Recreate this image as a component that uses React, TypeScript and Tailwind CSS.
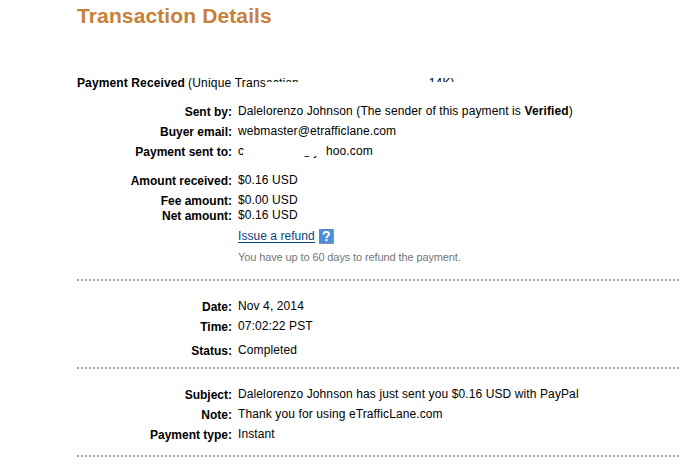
import type { ReactNode } from 'react'

interface RowProps {
  label: string
  children: ReactNode
  className?: string
}

function Row({ label, children, className = '' }: RowProps) {
  return (
    <div className={`flex h-[15px] whitespace-nowrap ${className}`}>
      <dt className="w-[155px] pt-px text-right font-bold">{label}</dt>
      <dd className="ml-[6px] tracking-[0.11px]">{children}</dd>
    </div>
  )
}

function DottedRule({ className = '' }: { className?: string }) {
  return (
    <div
      className={`h-[2px] w-[602px] bg-[repeating-linear-gradient(90deg,#a6a6a6_0_2px,transparent_2px_4px)] ${className}`}
    />
  )
}

function HelpIcon() {
  return (
    <svg width="15" height="15" viewBox="0 0 15 15" className="ml-1 block">
      <rect width="15" height="15" fill="#8a929b" />
      <rect width="14" height="14" fill="#4b8edb" />
      <path
        d="M4.6 5.4C4.6 3.8 5.6 3 7.3 3c1.7 0 2.7.8 2.7 2.1C10 6.9 7.4 7 7.4 9.2"
        fill="none"
        stroke="#fff"
        strokeWidth="2"
      />
      <rect x="6.4" y="10.2" width="2.1" height="2" fill="#fff" />
    </svg>
  )
}

export default function App() {
  return (
    <main className="h-[471px] w-[690px] overflow-hidden bg-white pl-[77px] font-['Liberation_Sans',Arial,sans-serif] text-[12px] leading-[15px] text-black">
      <h1 className="pt-1 text-[21px] leading-[24px] font-bold tracking-[0.12px] text-[#c88039]">
        Transaction Details
      </h1>

      <div className="mt-[48px] flex h-[15px] whitespace-nowrap">
        <span className="font-bold tracking-[0.12px]">Payment Received</span>
        <span className="ml-[3px] tracking-[0.2px]">(Unique Trans</span>
        <span className="relative tracking-[0.14px]">
          action
          <span className="absolute top-[6px] left-0 h-[9px] w-full bg-white" />
        </span>
        <span className="relative ml-[130px] tracking-[0.1px]">
          14K)
          <span className="absolute top-[6px] left-0 h-[9px] w-full bg-white" />
        </span>
      </div>

      <dl>
        <Row label="Sent by:" className="mt-[13px]">
          Dalelorenzo Johnson (The sender of this payment is <b>Verified</b>)
        </Row>
        <Row label="Buyer email:" className="mt-[5px]">
          webmaster@etrafficlane.com
        </Row>
        <Row label="Payment sent to:" className="mt-[5px]">
          <span className="flex">
            <span className="relative w-[6px]">
              c
              <span className="absolute top-[8px] left-[5px] h-[4px] w-[2px] bg-white" />
            </span>
            <span className="relative ml-[57px] w-[19px]">
              @y
              <span className="absolute top-0 left-0 h-[12px] w-full bg-white" />
            </span>
            <span className="ml-[6px]">hoo.com</span>
          </span>
        </Row>
        <Row label="Amount received:" className="mt-[14px]">
          $0.16 USD
        </Row>
        <Row label="Fee amount:" className="mt-[5px]">
          $0.00 USD
        </Row>
        <Row label="Net amount:">$0.16 USD</Row>
      </dl>

      <div className="mt-[6px] ml-[161px] flex h-[15px]">
        <a
          href="#"
          className="h-[14px] border-b border-[#084482] tracking-[0.05px] text-[#084482]"
        >
          Issue a refund
        </a>
        <HelpIcon />
      </div>
      <p className="mt-[6px] ml-[161px] text-[11px] tracking-[-0.11px] text-[#757575]">
        You have up to 60 days to refund the payment.
      </p>

      <DottedRule className="mt-[14px]" />

      <dl>
        <Row label="Date:" className="mt-[18px]">
          Nov 4, 2014
        </Row>
        <Row label="Time:" className="mt-[5px]">
          07:02:22 PST
        </Row>
        <Row label="Status:" className="mt-[9px]">
          Completed
        </Row>
      </dl>

      <DottedRule className="mt-[9px]" />

      <dl>
        <Row label="Subject:" className="mt-[18px]">
          Dalelorenzo Johnson has just sent you $0.16 USD with PayPal
        </Row>
        <Row label="Note:" className="mt-[5px]">
          Thank you for using eTrafficLane.com
        </Row>
        <Row label="Payment type:" className="mt-[5px]">
          Instant
        </Row>
      </dl>

      <DottedRule className="mt-[13px]" />
    </main>
  )
}
